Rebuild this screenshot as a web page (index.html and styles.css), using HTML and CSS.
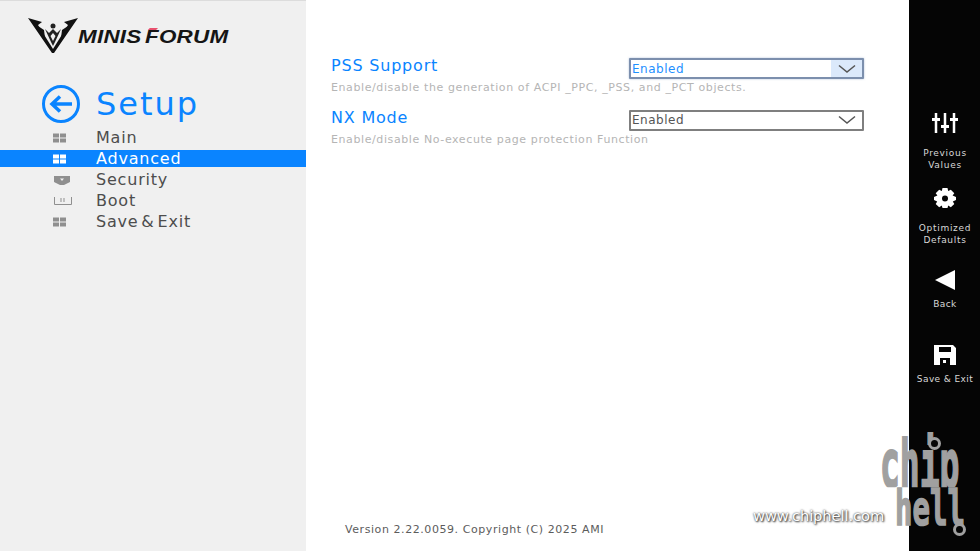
FILE: index.html
```html
<!DOCTYPE html>
<html lang="en">
<head>
  <meta charset="UTF-8">
  <title>BIOS Setup - Advanced</title>
  <link rel="stylesheet" href="styles.css">
</head>
<body>

  <div class="screen">

    <!-- Left menu -->
    <aside class="sidebar">
      <div class="brand">
        <svg class="brand-mark" viewBox="0 0 52 36" width="52" height="36">
          <path d="M1 1 L15 5 L11 8 L26 32 L41 8 L37 5 L51 1 L27 36 L25 36 Z" fill="#111"/>
          <path d="M11 9 L17 13 L18 21 Z M41 9 L35 13 L34 21 Z" fill="#111"/>
          <path d="M18 12 L22 16 L26 12 L30 16 L34 12 L28 25 L26 29 L24 25 Z M26 16 L23.500 19 L26 24 L28.500 19 Z" fill="#222" fill-rule="evenodd"/>
          <circle cx="26" cy="9" r="2.500" fill="#222"/>
        </svg>
        <div class="brand-name">MINIS<span class="brand-f"><span class="brand-tick"></span>FORUM</span></div>
      </div>

      <div class="setup-title">
        <svg viewBox="0 0 40 40" width="40" height="40">
          <circle cx="20" cy="20" r="17.500" fill="none" stroke="#0a84ff" stroke-width="3"/>
          <path d="M31 20 H11 M19 12.500 L11 20 L19 27.500" fill="none" stroke="#0a84ff" stroke-width="3.500"/>
        </svg>
        <span>Setup</span>
      </div>

      <nav class="menu">
        <div class="menu-item">
          <svg class="menu-icon" viewBox="0 0 20 12" width="20" height="12"><path class="grid-icon" d="M1 1.500 H7 V5.500 H1 Z M8 1.500 H14 V5.500 H8 Z M1 6.500 H7 V10.500 H1 Z M8 6.500 H14 V10.500 H8 Z"/></svg>
          <span>Main</span>
        </div>
        <div class="menu-item active">
          <svg class="menu-icon" viewBox="0 0 20 12" width="20" height="12"><path class="grid-icon" d="M1 1.500 H7 V5.500 H1 Z M8 1.500 H14 V5.500 H8 Z M1 6.500 H7 V10.500 H1 Z M8 6.500 H14 V10.500 H8 Z"/></svg>
          <span>Advanced</span>
        </div>
        <div class="menu-item">
          <svg class="menu-icon" viewBox="0 0 20 12" width="20" height="12"><path class="grid-icon" d="M2 2 H18 V8 L12 11 H8 L2 8 Z M8 4.500 L10 7 L12 4.500 Z" fill-rule="evenodd"/></svg>
          <span>Security</span>
        </div>
        <div class="menu-item">
          <svg class="menu-icon" viewBox="0 0 20 12" width="20" height="12"><path d="M2.500 2 V9.500 H19.500 V2 M9 3 V7 M12 3 V7" fill="none" stroke="#8f8f8f"/></svg>
          <span>Boot</span>
        </div>
        <div class="menu-item">
          <svg class="menu-icon" viewBox="0 0 20 12" width="20" height="12"><path class="grid-icon" d="M1 1.500 H7 V5.500 H1 Z M8 1.500 H14 V5.500 H8 Z M1 6.500 H7 V10.500 H1 Z M8 6.500 H14 V10.500 H8 Z"/></svg>
          <span>Save &amp; Exit</span>
        </div>
      </nav>
    </aside>

    <!-- Settings -->
    <main class="content">
      <div class="setting">
        <h3>PSS Support</h3>
        <div class="select focused">
          <span class="select-value">Enabled</span>
          <span class="select-arrow">
            <svg viewBox="0 0 18 10" width="18" height="10"><path d="M1 1.500 L9 8 L17 1.500" fill="none" stroke="#555" stroke-width="1.500"/></svg>
          </span>
        </div>
        <p>Enable/disable the generation of ACPI _PPC, _PSS, and _PCT objects.</p>
      </div>

      <div class="setting">
        <h3>NX Mode</h3>
        <div class="select">
          <span class="select-value">Enabled</span>
          <span class="select-arrow">
            <svg viewBox="0 0 18 10" width="18" height="10"><path d="M1 1.500 L9 8 L17 1.500" fill="none" stroke="#555" stroke-width="1.500"/></svg>
          </span>
        </div>
        <p>Enable/disable No-execute page protection Function</p>
      </div>

      <div class="version">Version 2.22.0059. Copyright (C) 2025 AMI</div>
    </main>

    <!-- Right toolbar -->
    <aside class="toolbar">
      <div class="tool">
        <svg viewBox="0 0 26 22" width="26" height="22">
          <path d="M4 1 V21 M13 1 V21 M22 1 V21" stroke="#fff" stroke-width="2.500"/>
          <path d="M0 6 H8 V9 H0 Z M9 13 H17 V16 H9 Z M18 6 H26 V9 H18 Z" fill="#fff"/>
        </svg>
        <div class="tool-label wide">Previous<br>Values</div>
      </div>
      <div class="tool">
        <svg viewBox="0 0 24 22" width="24" height="22">
          <path d="M9.500 1 H14.500 L15.200 4 L17.800 2.800 L21.300 6.300 L19.600 8.600 L23 10 V13 L19.800 14.400 L21.300 16.900 L17.800 20.200 L15.200 18.500 L14.500 21 H9.500 L8.800 18.500 L6.200 20.200 L2.700 16.900 L4.200 14.400 L1 13 V10 L4.400 8.600 L2.700 6.300 L6.200 2.800 L8.800 4 Z M12 8.500 A3 3 0 1 0 12 14.500 A3 3 0 1 0 12 8.500 Z" fill="#fff" fill-rule="evenodd"/>
        </svg>
        <div class="tool-label wide">Optimized<br>Defaults</div>
      </div>
      <div class="tool tool-back">
        <svg viewBox="0 0 24 22" width="24" height="22"><path d="M22 1 V21 L2 11 Z" fill="#fff"/></svg>
        <div class="tool-label">Back</div>
      </div>
      <div class="tool">
        <svg viewBox="0 0 24 22" width="24" height="22">
          <path d="M1 1 H20 L23 4 V21 H1 Z M6 3 V8 H18 V3 Z M7 14 V21 H17 V14 Z" fill="#fff" fill-rule="evenodd"/>
          <path d="M10 16 H13 V19 H10 Z" fill="#fff"/>
        </svg>
        <div class="tool-label">Save &amp; Exit</div>
      </div>
    </aside>

    <!-- Watermark over the corner -->
    <div class="watermark">
      <div class="wm-logo">
        <span class="wm-chip">chip</span>
        <span class="wm-hell">hell</span>
        <span class="wm-dot wm-dot-top"></span>
        <span class="wm-dot wm-dot-bottom"></span>
      </div>
      <div class="wm-url">www.chiphell.com</div>
    </div>

  </div>

</body>
</html>
```

FILE: styles.css
```css
* {
  box-sizing: border-box;
  margin: 0;
  padding: 0;
}

body {
  font-family: 'DejaVu Sans', 'Open Sans', sans-serif;
  background: #ffffff;
  overflow: hidden;
}

.screen {
  display: flex;
  position: relative;
  width: 980px;
  height: 551px;
  overflow: hidden;
}

/* Left menu */
.sidebar {
  width: 306px;
  flex-shrink: 0;
  background: #f0f0f0;
  border-top: 1px solid #dcdcdc;
  padding-top: 16px;
}

.brand {
  display: flex;
  align-items: flex-end;
  margin-left: 27px;
  height: 36px;
}

.brand-name {
  font-family: 'Liberation Sans', sans-serif;
  font-size: 19px;
  font-weight: bold;
  font-style: italic;
  color: #151515;
  letter-spacing: 0.2px;
  line-height: 19px;
  margin-bottom: 7px;
  margin-left: -1px;
  transform: scaleX(1.18);
  transform-origin: left center;
}

.brand-f {
  position: relative;
  margin-left: 3px;
}

.brand-tick {
  position: absolute;
  left: 3px;
  top: 2px;
  width: 7px;
  height: 2px;
  background: #e8506e;
  transform: skewX(-40deg);
}

.setup-title {
  display: flex;
  align-items: center;
  gap: 15px;
  margin-top: 31px;
  margin-left: 41px;
  color: #0a84ff;
  font-size: 32px;
  letter-spacing: 2px;
  height: 40px;
}

.menu {
  margin-top: 5px;
}

.menu-item {
  display: flex;
  align-items: center;
  height: 17px;
  margin-bottom: 4px;
  padding-left: 52px;
  font-size: 16px;
  letter-spacing: 0.8px;
  word-spacing: -3px;
  color: #4d4d4d;
}

.menu-icon {
  margin-right: 24px;
}

.grid-icon {
  fill: #8f8f8f;
}

.menu-item.active {
  background: #0a84ff;
  color: #ffffff;
}

.menu-item.active .grid-icon {
  fill: #ffffff;
}

/* Settings */
.content {
  flex: 1;
  min-width: 0;
  display: flex;
  flex-direction: column;
  padding: 57px 45px 14px 25px;
}

.setting {
  display: grid;
  grid-template-columns: 1fr 235px;
  grid-template-rows: 22px auto;
  height: 51.500px;
}

.setting h3 {
  font-size: 16px;
  font-weight: normal;
  letter-spacing: 0.8px;
  line-height: 18px;
  color: #0a84ff;
}

.setting p {
  grid-column: 1 / -1;
  margin-top: 2px;
  font-size: 11px;
  letter-spacing: 0.6px;
  line-height: 14px;
  color: #b5b5b5;
  white-space: nowrap;
}

.select {
  display: flex;
  align-items: center;
  justify-content: space-between;
  height: 21px;
  margin-top: 1px;
  border: 2px solid #7f7f7f;
  border-radius: 1px;
  background: #ffffff;
  font-size: 12px;
  letter-spacing: 0.5px;
  color: #555555;
}

.select-value {
  padding-left: 1px;
}

.select-arrow {
  display: flex;
  align-items: center;
  justify-content: center;
  width: 31px;
  height: 100%;
}

.select.focused {
  border-color: #7c8fad;
  color: #1e90ff;
  box-shadow: 0 0 2px rgba(80, 120, 180, 0.5);
}

.select.focused .select-arrow {
  background: #dbe9fb;
}

.version {
  margin-top: auto;
  margin-left: 14px;
  font-size: 11px;
  letter-spacing: 0.57px;
  line-height: 14px;
  color: #5c5c5c;
}

/* Right toolbar */
.toolbar {
  width: 71px;
  flex-shrink: 0;
  background: #050505;
  padding-top: 112px;
  padding-left: 1px;
}

.tool {
  display: flex;
  flex-direction: column;
  align-items: center;
  height: 75px;
  color: #d8d8d8;
}

.tool-back {
  margin-top: 7px;
}

.tool-label {
  margin-top: 8px;
  font-size: 9px;
  letter-spacing: 0.4px;
  line-height: 11px;
  text-align: center;
  white-space: nowrap;
}

.tool-label.wide {
  margin-top: 14px;
  letter-spacing: 0.7px;
  line-height: 11.500px;
}

/* Watermark */
.watermark {
  position: absolute;
  right: 0;
  bottom: 0;
  width: 230px;
  height: 120px;
}

.wm-logo {
  position: absolute;
  left: 128px;
  top: 0;
  width: 100px;
  height: 115px;
}

.wm-chip,
.wm-hell {
  position: absolute;
  font-family: 'DejaVu Sans Mono', monospace;
  font-weight: bold;
  color: #a0a0a0;
  -webkit-text-stroke: 1px #a0a0a0;
  line-height: 0.7;
  transform-origin: left top;
}

/* the logo's p has no tail, so cut it at the baseline */
.wm-chip {
  left: 2px;
  top: 10px;
  font-size: 33px;
  transform: scaleY(2);
  clip-path: inset(-20px -5px 0 -5px);
}

.wm-hell {
  left: 17px;
  top: 60px;
  font-size: 29px;
  transform: scaleY(1.68);
}

.wm-dot {
  position: absolute;
  width: 13px;
  height: 13px;
  border: 3px solid #a0a0a0;
  border-radius: 50%;
  background: #050505;
}

.wm-dot-top {
  left: 50px;
  top: 6px;
}

.wm-dot-bottom {
  left: 75px;
  top: 92px;
}

.wm-url {
  position: absolute;
  left: 3px;
  top: 76px;
  font-family: 'DejaVu Sans', sans-serif;
  font-size: 14.700px;
  letter-spacing: -0.1px;
  color: #ffffff;
  text-shadow: 0 0 2px #333333, 1px 1px 2px #333333;
}
```
